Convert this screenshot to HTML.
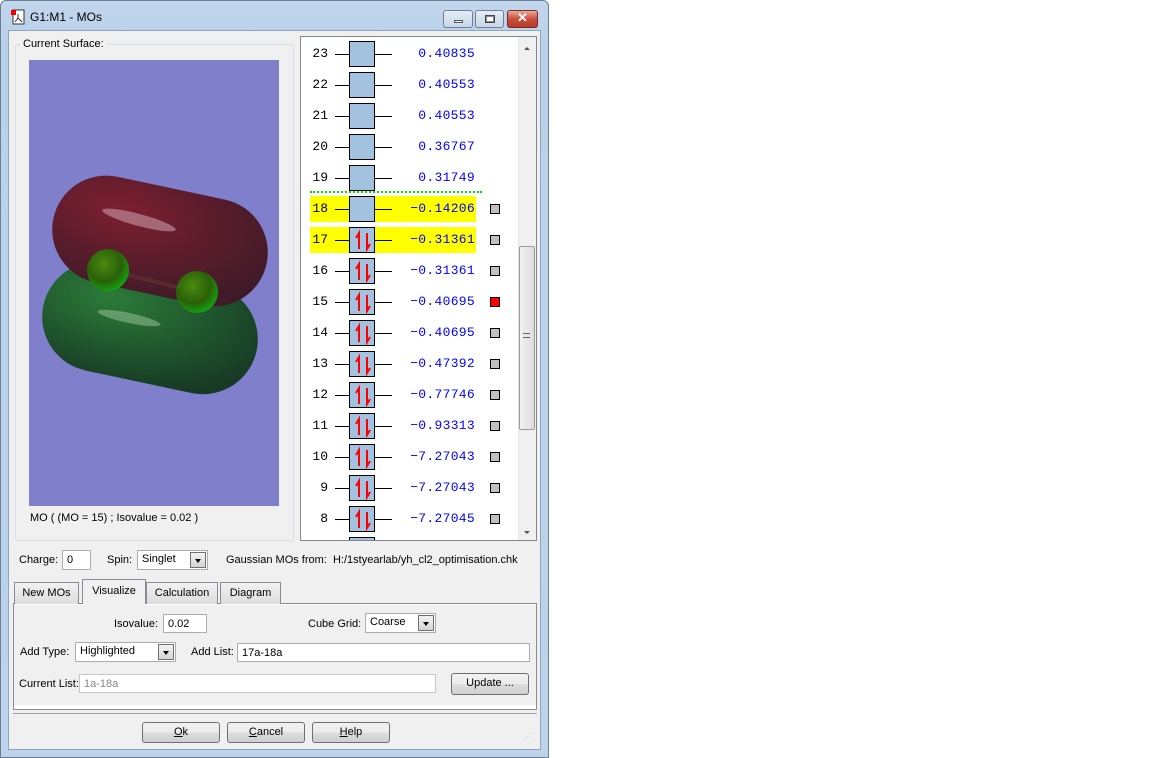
<!DOCTYPE html>
<html><head><meta charset="utf-8"><style>
*{box-sizing:border-box;margin:0;padding:0}
body{width:1152px;height:758px;background:#fff;position:relative;overflow:hidden;font-family:"Liberation Sans",sans-serif;font-size:11px;color:#000}
.a{position:absolute;white-space:nowrap}
.win{left:0;top:0;width:549px;height:758px;background:linear-gradient(#c2d6ec,#b9d1ea 40px,#bcd3eb);border:1px solid #6d7f94;border-radius:6px 6px 0 0}
.client{left:8px;top:30px;width:533px;height:720px;background:#f0f0f0;border:1px solid #8ea5bf}
.tb{top:10px;height:18px;border:1px solid #6f8193;border-radius:3px;background:linear-gradient(#e4ecf6,#c7d6e8)}
.grp{left:15px;top:44px;width:279px;height:497px;border:1px solid #d5dfe5;border-radius:3px}
.list{left:300px;top:36px;width:237px;height:505px;background:#fff;border:1px solid #828790}
.num{position:absolute;width:28px;text-align:right;font-family:"Liberation Mono",monospace;font-size:13px}
.ln{position:absolute;height:1px;background:#000}
.box{position:absolute;width:26px;height:26px;background:#a3c2e0;border:1px solid #000}
.val{position:absolute;left:395px;width:80px;text-align:right;font-family:"Liberation Mono",monospace;font-size:13px;color:#0000ff;letter-spacing:0.3px}
.sq{position:absolute;left:490px;width:10px;height:10px;background:#c0c0c0;border:1px solid #000}
.inp{position:absolute;background:#fff;border:1px solid #abadb3;height:20px;padding:3px 4px;white-space:nowrap}
.btn{position:absolute;border:1px solid #707070;border-radius:3px;background:linear-gradient(#f2f2f2,#ebebeb 50%,#dddddd 51%,#cfcfcf);text-align:center;height:21px;line-height:19px}
.dd{position:absolute;width:16px;height:16px;border:1px solid #707070;background:linear-gradient(#f2f2f2,#d5d5d5);top:1px;right:1px}
.dd:after{content:"";position:absolute;left:4px;top:6px;border:3px solid transparent;border-top:4px solid #000}
.tab{position:absolute;top:582px;height:22px;border:1px solid #898c95;border-bottom:none;background:linear-gradient(#f2f2f2,#dcdcdc);padding:4px 0;text-align:center;white-space:nowrap}
</style></head><body>
<div class="a win"></div>
<svg class="a" style="left:10px;top:9px" width="16" height="16"><rect x="3" y="1" width="11" height="14" fill="#fff" stroke="#333"/><rect x="1" y="1" width="5" height="5" fill="#e00"/><path d="M8 5 L8 9 M5 13 L8 9 L12 13" stroke="#333" fill="none"/></svg>
<div class="a" style="left:30px;top:10px;font-size:12px">G1:M1 - MOs</div>
<div class="a tb" style="left:443px;width:30px"><div class="a" style="left:10px;top:9px;width:9px;height:3px;border:1px solid #555;background:#fff"></div></div>
<div class="a tb" style="left:475px;width:29px"><div class="a" style="left:9px;top:4px;width:10px;height:8px;border:1px solid #444;background:#fff;box-shadow:inset 0 0 0 1px #888"></div></div>
<div class="a tb" style="left:507px;width:31px;border-color:#7a2a22;background:linear-gradient(#e9a99c,#c9503e 50%,#b83a27)"><div class="a" style="left:0;top:-1px;width:29px;text-align:center;color:#fff;font-weight:bold;font-size:13px">✕</div></div>
<div class="a client"></div>
<div class="a grp"></div>
<div class="a" style="left:20px;top:38px;background:#f0f0f0;padding:0 3px">Current Surface:</div>
<svg class="a" style="left:29px;top:60px" width="250" height="446">
<defs>
<radialGradient id="r" cx="0.3" cy="0.3" r="0.8"><stop offset="0" stop-color="#7d1f30"/><stop offset="1" stop-color="#3f1a28"/></radialGradient>
<radialGradient id="g" cx="0.3" cy="0.3" r="0.8"><stop offset="0" stop-color="#2b7b38"/><stop offset="1" stop-color="#173a25"/></radialGradient>
<radialGradient id="s" cx="0.4" cy="0.35" r="0.7"><stop offset="0" stop-color="#4a8a10"/><stop offset="0.6" stop-color="#2a6008"/><stop offset="1" stop-color="#11aa11"/></radialGradient>
</defs>
<rect width="250" height="446" fill="#7f7fcc"/>
<rect x="12" y="213" width="218" height="110" rx="55" fill="url(#g)" transform="rotate(12 121 268)"/>
<rect x="22" y="127" width="218" height="108" rx="54" fill="url(#r)" transform="rotate(12 131 181)"/>
<ellipse cx="110" cy="160" rx="38" ry="6" fill="#c89aa8" opacity="0.6" transform="rotate(15 110 160)"/>
<ellipse cx="100" cy="258" rx="32" ry="5" fill="#a0c8a0" opacity="0.5" transform="rotate(12 100 258)"/>
<line x1="79" y1="210" x2="168" y2="232" stroke="#5a2a30" stroke-width="4"/>
<circle cx="79" cy="210" r="21" fill="url(#s)"/>
<circle cx="168" cy="232" r="21" fill="url(#s)"/>
</svg>
<div class="a" style="left:30px;top:512px">MO ( (MO = 15) ; Isovalue = 0.02 )</div>

<div class="a list"></div>
<div class="a" style="left:518px;top:37px;width:18px;height:503px;background:#f0f0f0;border-left:1px solid #e6e6e6"></div>
<div class="a" style="left:524px;top:44px;border:3px solid transparent;border-bottom:3px solid #555"></div>
<div class="a" style="left:524px;top:531px;border:3px solid transparent;border-top:3px solid #555"></div>
<div class="a" style="left:519px;top:246px;width:16px;height:184px;border:1px solid #9a9a9a;border-radius:2px;background:linear-gradient(90deg,#f2f2f2,#dcdcdc)"></div>
<div class="a" style="left:523px;top:333px;width:7px;height:5px;border-top:1px solid #666;border-bottom:1px solid #666"></div>

<div class="a" style="left:310px;top:196px;width:166px;height:26px;background:#ffff00"></div>
<div class="a" style="left:310px;top:227px;width:166px;height:26px;background:#ffff00"></div>
<div class="a" style="left:310px;top:191px;width:172px;border-top:2px dotted #00dd00"></div>

<svg width="0" height="0" style="position:absolute"><defs><g id="ar"><path d="M9 21 L9 5 L6 10 M17 5 L17 21 L20 16" stroke="#f00" stroke-width="2" fill="none"/></g></defs></svg>

<div class="num" style="left:300px;top:46px">23</div><div class="ln" style="left:335px;top:54px;width:57px"></div><div class="box" style="left:349px;top:41px"></div><div class="val" style="top:46px">0.40835</div>
<div class="num" style="left:300px;top:77px">22</div><div class="ln" style="left:335px;top:85px;width:57px"></div><div class="box" style="left:349px;top:72px"></div><div class="val" style="top:77px">0.40553</div>
<div class="num" style="left:300px;top:108px">21</div><div class="ln" style="left:335px;top:116px;width:57px"></div><div class="box" style="left:349px;top:103px"></div><div class="val" style="top:108px">0.40553</div>
<div class="num" style="left:300px;top:139px">20</div><div class="ln" style="left:335px;top:147px;width:57px"></div><div class="box" style="left:349px;top:134px"></div><div class="val" style="top:139px">0.36767</div>
<div class="num" style="left:300px;top:170px">19</div><div class="ln" style="left:335px;top:178px;width:57px"></div><div class="box" style="left:349px;top:165px"></div><div class="val" style="top:170px">0.31749</div>
<div class="num" style="left:300px;top:201px">18</div><div class="ln" style="left:335px;top:209px;width:57px"></div><div class="box" style="left:349px;top:196px"></div><div class="val" style="top:201px">−0.14206</div><div class="sq" style="top:204px"></div>
<div class="num" style="left:300px;top:232px">17</div><div class="ln" style="left:335px;top:240px;width:57px"></div><div class="box" style="left:349px;top:227px"><svg width="26" height="26"><use href="#ar"/></svg></div><div class="val" style="top:232px">−0.31361</div><div class="sq" style="top:235px"></div>
<div class="num" style="left:300px;top:263px">16</div><div class="ln" style="left:335px;top:271px;width:57px"></div><div class="box" style="left:349px;top:258px"><svg width="26" height="26"><use href="#ar"/></svg></div><div class="val" style="top:263px">−0.31361</div><div class="sq" style="top:266px"></div>
<div class="num" style="left:300px;top:294px">15</div><div class="ln" style="left:335px;top:302px;width:57px"></div><div class="box" style="left:349px;top:289px"><svg width="26" height="26"><use href="#ar"/></svg></div><div class="val" style="top:294px">−0.40695</div><div class="sq" style="top:297px;background:#f00"></div>
<div class="num" style="left:300px;top:325px">14</div><div class="ln" style="left:335px;top:333px;width:57px"></div><div class="box" style="left:349px;top:320px"><svg width="26" height="26"><use href="#ar"/></svg></div><div class="val" style="top:325px">−0.40695</div><div class="sq" style="top:328px"></div>
<div class="num" style="left:300px;top:356px">13</div><div class="ln" style="left:335px;top:364px;width:57px"></div><div class="box" style="left:349px;top:351px"><svg width="26" height="26"><use href="#ar"/></svg></div><div class="val" style="top:356px">−0.47392</div><div class="sq" style="top:359px"></div>
<div class="num" style="left:300px;top:387px">12</div><div class="ln" style="left:335px;top:395px;width:57px"></div><div class="box" style="left:349px;top:382px"><svg width="26" height="26"><use href="#ar"/></svg></div><div class="val" style="top:387px">−0.77746</div><div class="sq" style="top:390px"></div>
<div class="num" style="left:300px;top:418px">11</div><div class="ln" style="left:335px;top:426px;width:57px"></div><div class="box" style="left:349px;top:413px"><svg width="26" height="26"><use href="#ar"/></svg></div><div class="val" style="top:418px">−0.93313</div><div class="sq" style="top:421px"></div>
<div class="num" style="left:300px;top:449px">10</div><div class="ln" style="left:335px;top:457px;width:57px"></div><div class="box" style="left:349px;top:444px"><svg width="26" height="26"><use href="#ar"/></svg></div><div class="val" style="top:449px">−7.27043</div><div class="sq" style="top:452px"></div>
<div class="num" style="left:300px;top:480px">9</div><div class="ln" style="left:335px;top:488px;width:57px"></div><div class="box" style="left:349px;top:475px"><svg width="26" height="26"><use href="#ar"/></svg></div><div class="val" style="top:480px">−7.27043</div><div class="sq" style="top:483px"></div>
<div class="num" style="left:300px;top:511px">8</div><div class="ln" style="left:335px;top:519px;width:57px"></div><div class="box" style="left:349px;top:506px"><svg width="26" height="26"><use href="#ar"/></svg></div><div class="val" style="top:511px">−7.27045</div><div class="sq" style="top:514px"></div>
<div class="box" style="left:349px;top:537px;height:3px;border-bottom:none"></div>

<div class="a" style="left:19px;top:554px">Charge:</div>
<div class="inp" style="left:62px;top:550px;width:29px">0</div>
<div class="a" style="left:107px;top:554px">Spin:</div>
<div class="inp" style="left:137px;top:550px;width:71px;padding-top:2px">Singlet<div class="dd"></div></div>
<div class="a" style="left:226px;top:554px;width:304px;overflow:hidden">Gaussian MOs from:&nbsp; H:/1styearlab/yh_cl2_optimisation.chk</div>

<div class="a" style="left:13px;top:603px;width:524px;height:107px;background:#fff;border:1px solid #898c95"></div>
<div class="a" style="left:14px;top:605px;width:522px;height:100px;background:#f0f0f0"></div>
<div class="tab" style="left:14px;width:65px">New MOs</div>
<div class="tab" style="left:82px;top:579px;width:64px;height:25px;background:#f0f0f0;padding-top:5px">Visualize</div>
<div class="tab" style="left:146px;width:72px">Calculation</div>
<div class="tab" style="left:220px;width:61px">Diagram</div>
<div class="a" style="left:83px;top:603px;width:62px;height:2px;background:#f0f0f0"></div>

<div class="a" style="left:114px;top:618px">Isovalue:</div>
<div class="inp" style="left:163px;top:614px;width:44px;height:19px">0.02</div>
<div class="a" style="left:308px;top:618px">Cube Grid:</div>
<div class="inp" style="left:365px;top:613px;width:71px;padding-top:2px">Coarse<div class="dd"></div></div>
<div class="a" style="left:20px;top:646px">Add Type:</div>
<div class="inp" style="left:75px;top:642px;width:101px;padding-top:2px">Highlighted<div class="dd"></div></div>
<div class="a" style="left:191px;top:646px">Add List:</div>
<div class="inp" style="left:237px;top:643px;width:293px;height:19px">17a-18a</div>
<div class="a" style="left:19px;top:678px">Current List:</div>
<div class="inp" style="left:79px;top:674px;width:357px;height:19px;color:#888;border-color:#c5c5c5">1a-18a</div>
<div class="btn" style="left:451px;top:673px;width:78px;height:22px">Update ...</div>

<div class="a" style="left:13px;top:713px;width:524px;border-top:1px solid #a0a0a0"></div>
<div class="btn" style="left:142px;top:722px;width:78px"><u>O</u>k</div>
<div class="btn" style="left:227px;top:722px;width:78px"><u>C</u>ancel</div>
<div class="btn" style="left:312px;top:722px;width:78px"><u>H</u>elp</div>
<div class="a" style="left:524px;top:732px;color:#aaa;font-size:8px;letter-spacing:-1px">⋰</div>
</body></html>
